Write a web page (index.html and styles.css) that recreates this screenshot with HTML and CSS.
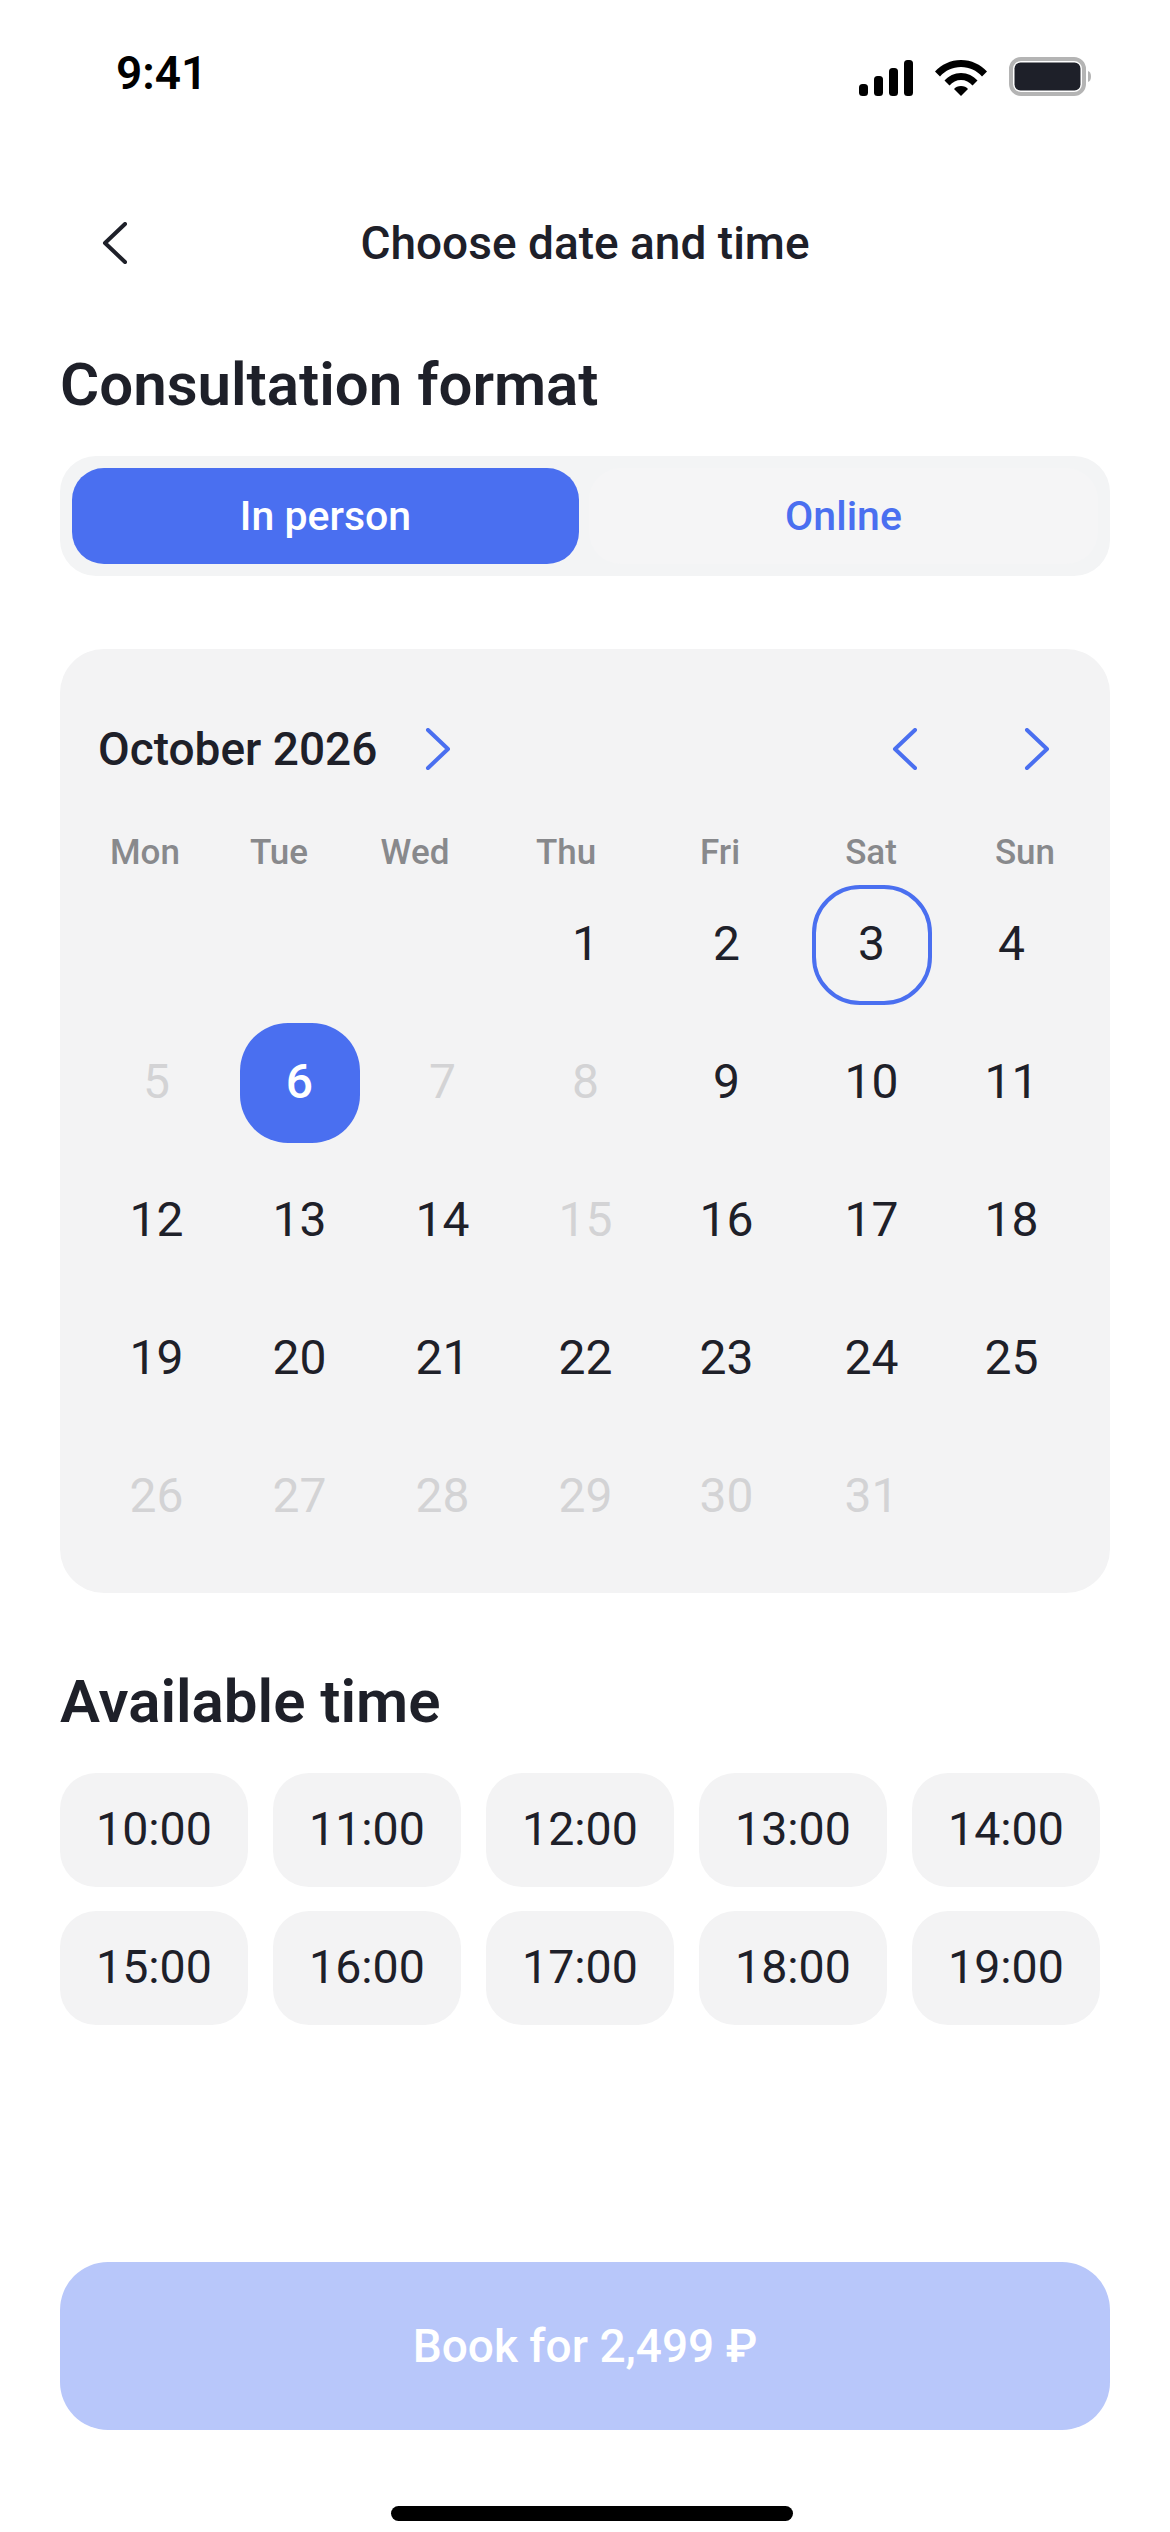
FILE: index.html
```html
<!DOCTYPE html>
<html lang="en">
<head>
<meta charset="utf-8">
<title>Choose date and time</title>
<link rel="stylesheet" href="styles.css">
</head>
<body>
<div class="screen">
  <div class="status">
    <span class="clock">9:41</span>
    <div class="status-icons">
      <svg class="signal" width="54" height="36" viewBox="0 0 54 36"><rect x="0" y="24" width="9" height="12" rx="3.500"/><rect x="15" y="16" width="9" height="20" rx="3.500"/><rect x="30" y="8" width="9" height="28" rx="3.500"/><rect x="45" y="0" width="9" height="36" rx="3.500"/></svg>
      <svg class="wifi" width="52" height="36" viewBox="0 0 52 36"><path d="M0 11.500C6.500 4.500 15.500 0 26 0s19.500 4.500 26 11.500l-5 5C41.500 10.500 34.500 7 26 7S10.500 10.500 5 16.500z"/><path d="M9.500 20.500C13.500 16 19.500 13 26 13s12.500 3 16.500 7.500l-5 5C34.500 22 30.500 20 26 20s-8.500 2-11.500 5.500z"/><path d="M26 26c-3 0-5.500 1.200-7 3l7 7 7-7c-1.500-1.800-4-3-7-3z"/></svg>
      <svg class="battery" width="82" height="39" viewBox="0 0 82 39"><rect x="2" y="2" width="73" height="35" rx="10" fill="#fff" stroke="#b4b4b4" stroke-width="4"/><rect x="5.500" y="5.500" width="66" height="28" rx="6" fill="#1e2029"/><path d="M79 14c2 .5 3 2.500 3 5.500s-1 5-3 5.500z" fill="#b4b4b4"/></svg>
    </div>
  </div>

  <header class="nav">
    <svg class="back" width="26" height="42" viewBox="0 0 26 42"><path d="M23 2L3 21l20 19" fill="none" stroke="#1e2029" stroke-width="4" stroke-linecap="round" stroke-linejoin="round"/></svg>
    <h1 class="nav-title">Choose date and time</h1>
  </header>

  <h2 class="section-title format-title">Consultation format</h2>
  <div class="segment">
    <div class="seg-item seg-active">In person</div>
    <div class="seg-item seg-idle">Online</div>
  </div>

  <section class="calendar">
    <div class="cal-head">
      <span class="month">October 2026</span>
      <svg class="chev month-chev" width="26" height="42" viewBox="0 0 26 42"><path d="M3 2l20 19L3 40"/></svg>
      <svg class="chev prev" width="26" height="42" viewBox="0 0 26 42"><path d="M23 2L3 21l20 19"/></svg>
      <svg class="chev next" width="26" height="42" viewBox="0 0 26 42"><path d="M3 2l20 19L3 40"/></svg>
    </div>
    <div class="weekdays">
      <span>Mon</span><span>Tue</span><span>Wed</span><span>Thu</span><span>Fri</span><span>Sat</span><span>Sun</span>
    </div>
    <div class="days">
      <span class="day blank"></span><span class="day blank"></span><span class="day blank"></span>
      <span class="day">1</span><span class="day">2</span><span class="day today">3</span><span class="day">4</span>
      <span class="day off">5</span><span class="day selected">6</span><span class="day off">7</span><span class="day off">8</span><span class="day">9</span><span class="day">10</span><span class="day">11</span>
      <span class="day">12</span><span class="day">13</span><span class="day">14</span><span class="day off">15</span><span class="day">16</span><span class="day">17</span><span class="day">18</span>
      <span class="day">19</span><span class="day">20</span><span class="day">21</span><span class="day">22</span><span class="day">23</span><span class="day">24</span><span class="day">25</span>
      <span class="day off">26</span><span class="day off">27</span><span class="day off">28</span><span class="day off">29</span><span class="day off">30</span><span class="day off">31</span><span class="day blank"></span>
    </div>
  </section>

  <h2 class="section-title time-title">Available time</h2>
  <div class="times">
    <span class="slot">10:00</span><span class="slot">11:00</span><span class="slot">12:00</span><span class="slot">13:00</span><span class="slot">14:00</span>
    <span class="slot">15:00</span><span class="slot">16:00</span><span class="slot">17:00</span><span class="slot">18:00</span><span class="slot">19:00</span>
  </div>

  <button class="book">Book for 2,499 ₽</button>
  <div class="home-bar"></div>
</div>
</body>
</html>
```

FILE: styles.css
```css
* { box-sizing: border-box; }
html, body { margin: 0; padding: 0; background: #fff; }
body { font-family: Roboto, "Noto Sans", sans-serif; color: #1e2029; }
.screen { width: 1170px; height: 2532px; display: flex; flex-direction: column; padding: 0 60px; overflow: hidden; }

.status { height: 181px; display: flex; justify-content: space-between; align-items: flex-start; margin: 0 -60px; padding: 44px 79px 0 116px; flex: none; }
.clock { font-size: 46px; line-height: 58px; font-weight: 600; color: #000; }
.status-icons { display: flex; align-items: flex-end; gap: 22px; margin-top: 13px; }
.signal, .wifi { fill: #000; }

.nav { height: 124px; display: flex; align-items: center; position: relative; flex: none; }
.back { margin-left: 42px; }
.nav-title { position: absolute; left: 0; right: 0; margin: 0; text-align: center; font-size: 46px; line-height: 60px; font-weight: 500; }

.section-title { margin: 0; font-weight: 600; font-size: 60px; line-height: 70px; flex: none; }
.format-title { margin-top: 45px; }

.segment { margin-top: 36px; height: 120px; background: #f3f4f5; border-radius: 36px; padding: 12px; display: flex; flex: none; gap: 10px; }
.seg-item { display: flex; align-items: center; justify-content: center; font-size: 41px; font-weight: 500; border-radius: 32px; height: 96px; }
.seg-active { width: 507px; background: #4a6ff0; color: #fff; }
.seg-idle { flex: 1; background: #f5f5f6; color: #4a6ff0; }

.calendar { margin-top: 73px; height: 944px; flex: none; background: #f3f3f4; border-radius: 44px; padding: 70px 0 0 0; }
.cal-head { display: flex; align-items: center; height: 60px; padding-left: 38px; }
.month { font-size: 46px; line-height: 60px; font-weight: 500; }
.chev { fill: none; stroke: #4a6ff0; stroke-width: 4; stroke-linecap: round; stroke-linejoin: round; }
.month-chev { margin-left: 48px; }
.prev { margin-left: auto; }
.next { margin-left: 106px; margin-right: 60px; }

.weekdays { margin-top: 52px; display: grid; grid-template-columns: 110px 158px 114px 188px 120px 182px 126px; padding-left: 30px; font-size: 35px; line-height: 44px; font-weight: 500; color: #88898c; text-align: center; }

.days { margin-top: 10px; display: grid; grid-template-columns: 143px 143px 143px 143px 139px 151px 129px; grid-auto-rows: 120px; row-gap: 18px; padding-left: 25px; }
.day { justify-self: center; width: 120px; height: 120px; display: flex; align-items: center; justify-content: center; padding-bottom: 3px; font-size: 48px; font-weight: 400; border-radius: 48px; color: #1e2029; }
.off { color: #d3d3d5; }
.today { border: 4px solid #4a6ff0; }
.selected { background: #4a6ff0; color: #fff; font-weight: 500; }

.time-title { margin-top: 74px; }
.times { margin-top: 36px; display: grid; grid-template-columns: repeat(5, 188px); grid-auto-rows: 114px; column-gap: 25px; row-gap: 24px; }
.slot { display: flex; align-items: center; justify-content: center; padding-bottom: 2px; background: #f3f3f4; border-radius: 36px; font-size: 46.500px; font-weight: 400; }

.book { margin-top: auto; height: 168px; width: 100%; flex: none; border: 0; border-radius: 48px; background: #b8c7fa; color: #fff; font-family: inherit; font-size: 46px; font-weight: 500; }
.home-bar { margin: 76px 0 11px 331px; width: 402px; height: 15px; border-radius: 8px; background: #000; flex: none; }
```
